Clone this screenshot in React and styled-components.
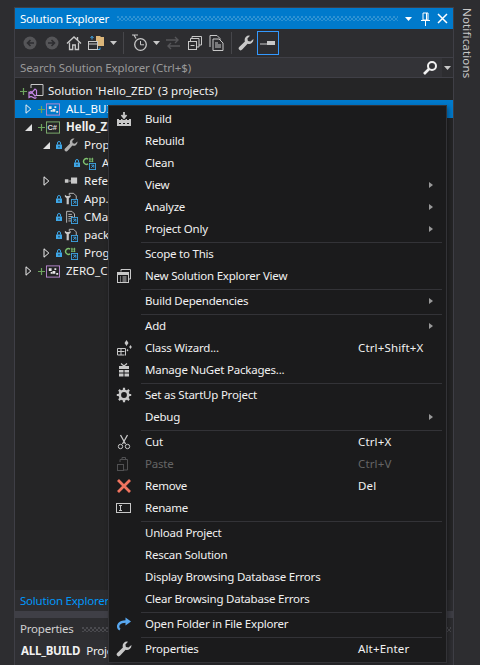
import React from "react";
import styled, { createGlobalStyle } from "styled-components";

const GlobalStyle = createGlobalStyle`
  html, body {
    margin: 0;
    padding: 0;
    background: #2d2d30;
  }
  * { box-sizing: border-box; }
`;

const FONT = `"Noto Sans", "Open Sans", "Liberation Sans", sans-serif`;

const Page = styled.div`
  position: relative;
  width: 480px;
  height: 665px;
  overflow: hidden;
  display: flex;
  padding: 7px 0 0 14px;
  background: #2d2d30;
  color: #f1f1f1;
  font: 11.5px/16px ${FONT};
  letter-spacing: -0.22px;
`;

const Dock = styled.div`
  width: 440px;
  display: flex;
  flex-direction: column;
`;

const ExplorerPane = styled.section`
  height: 604px;
  display: flex;
  flex-direction: column;
  border: 1px solid #3f3f46;
  border-bottom: 0;
`;

const TitleBar = styled.header`
  height: 21px;
  flex: none;
  display: flex;
  align-items: center;
  padding: 0 2px 0 5px;
  background: #007acc;
  color: #fff;
`;

const Grip = styled.div`
  flex: 1;
  height: 5px;
  margin: 0 2px 0 8px;
  background-image:
    radial-gradient(circle at 1px 1px, ${(p) => p.$dot} 0.6px, transparent 1px),
    radial-gradient(circle at 3px 3px, ${(p) => p.$dot} 0.6px, transparent 1px);
  background-size: 4px 4px;
`;

const TitleBtn = styled.span`
  width: 17px;
  height: 16px;
  display: flex;
  align-items: center;
  justify-content: center;
`;

const Toolbar = styled.div`
  height: 28px;
  flex: none;
  display: flex;
  align-items: center;
  padding-left: 4px;
`;

const ToolBtn = styled.span`
  width: ${(p) => p.$w || 22}px;
  height: 24px;
  flex: none;
  display: flex;
  align-items: center;
  justify-content: center;
  border: 1px solid ${(p) => (p.$active ? "#3399ff" : "transparent")};
`;

const ToolSep = styled.span`
  width: 1px;
  height: 22px;
  flex: none;
  margin: 0 ${(p) => p.$r || 5}px 0 ${(p) => p.$l || 4}px;
  background: #46464a;
`;

const SearchBar = styled.div`
  height: 21px;
  flex: none;
  display: flex;
  align-items: center;
  background: #333337;
  border-top: 1px solid #3f3f46;
  border-bottom: 1px solid #3f3f46;
  padding-left: 5px;
  color: #999;
  letter-spacing: -0.1px;
`;

const SearchText = styled.span`
  flex: 1;
`;

const SearchBtn = styled.span`
  width: 24px;
  height: 100%;
  flex: none;
  display: flex;
  align-items: center;
  justify-content: center;
`;

const SearchCaret = styled.span`
  width: 11px;
  height: 100%;
  flex: none;
  display: flex;
  align-items: center;
  justify-content: center;
  background: #2d2d30;
`;

const Tree = styled.div`
  flex: 1;
  padding-top: 4px;
  background: #252526;
  letter-spacing: 0;
`;

const Row = styled.div`
  height: 18px;
  display: flex;
  align-items: center;
  padding-left: ${(p) => (p.$solution ? 2 : p.$depth * 18 + 6)}px;
  background: ${(p) => (p.$selected ? "#007acc" : "transparent")};
  color: ${(p) => (p.$selected ? "#fff" : "#f1f1f1")};
  font-weight: ${(p) => (p.$bold ? 700 : 400)};
  white-space: nowrap;
`;

const Slot = styled.span`
  width: ${(p) => p.$w}px;
  margin-left: ${(p) => p.$ml || 0}px;
  height: 16px;
  flex: none;
  display: flex;
  align-items: center;
  justify-content: center;
`;

const RowLabel = styled.span`
  margin-left: ${(p) => (p.$solution ? 4 : 6)}px;
`;

const BottomTab = styled.div`
  height: 21px;
  flex: none;
  display: flex;
  align-items: center;
  padding-left: 5px;
  background: #2d2d30;
  color: #0097fb;
`;

const PaneGap = styled.div`
  height: 7px;
  flex: none;
  background: #3f3f46;
`;

const PropertiesPane = styled.section`
  flex: 1;
  display: flex;
  flex-direction: column;
  border-left: 1px solid #3f3f46;
  border-right: 1px solid #3f3f46;
`;

const PropsTitle = styled.div`
  height: 22px;
  flex: none;
  display: flex;
  align-items: center;
  padding-left: 5px;
  background: #2d2d30;
  color: #d0d0d0;
`;

const PropsObject = styled.div`
  height: 25px;
  flex: none;
  display: flex;
  align-items: center;
  gap: 6px;
  padding: 0 0 4px 6px;
  background: #2f2f33;
  color: #f1f1f1;
`;

const Strong = styled.b`
  font-weight: 700;
`;

const SideRail = styled.aside`
  width: 26px;
  display: flex;
  justify-content: center;
  padding-top: 1px;
`;

const SideLabel = styled.span`
  writing-mode: vertical-rl;
  color: #c8c8c8;
  line-height: 16px;
  letter-spacing: 0.15px;
`;

const Menu = styled.div`
  position: absolute;
  left: 108px;
  top: 105px;
  width: 339px;
  padding: 3px 2px 1px;
  background: #1b1b1c;
  border: 1px solid #333337;
  box-shadow: 2px 2px 5px rgba(0, 0, 0, 0.35);
`;

const MenuRow = styled.div`
  height: 22px;
  padding-bottom: 2px;
  display: grid;
  grid-template-columns: 34px 1fr 70px 16px;
  align-items: center;
  color: ${(p) => (p.$disabled ? "#656565" : "#f1f1f1")};
  white-space: nowrap;
`;

const MenuIcon = styled.span`
  display: flex;
  align-items: center;
  justify-content: center;
  padding-right: 8px;
`;

const MenuSep = styled.div`
  height: 1px;
  margin: 1px 2px 1px 30px;
  background: #333337;
`;

const Shortcut = styled.span`
  color: ${(p) => (p.$disabled ? "#656565" : "#f1f1f1")};
  letter-spacing: 0.15px;
`;

const SubArrow = styled.span`
  width: 0;
  height: 0;
  justify-self: start;
  margin-left: 1px;
  border-left: 4px solid #999;
  border-top: 3.5px solid transparent;
  border-bottom: 3.5px solid transparent;
`;

const GRAY = "#c8c8c8";
const BLUE = "#3ea6e6";

const Svg = ({ size = 16, children }) => (
  <svg width={size} height={size} viewBox="0 0 16 16" fill="none">{children}</svg>
);

const WRENCH = "M15.4 4.1a4.4 4.4 0 0 1-5.8 4.6L4.2 14.6a2 2 0 0 1-3-2.7l5.7-5.5A4.4 4.4 0 0 1 12 .7L9.4 3.4l.5 2.6 2.6.5z";

const Caret = ({ color = GRAY }) => (
  <svg width="7" height="4" viewBox="0 0 7 4"><path d="M0 0h7L3.5 4z" fill={color} /></svg>
);

const NavCircle = ({ flip }) => (
  <Svg>
    <circle cx="8" cy="8" r="6.5" fill="#555558" />
    <path d={flip ? "M4 8h6M7.5 5l3 3-3 3" : "M12 8H6M8.5 5l-3 3 3 3"} stroke="#2d2d30" strokeWidth="1.6" />
  </Svg>
);

const HomeIcon = () => (
  <Svg>
    <path d="M1 8.5 8 2l7 6.5" stroke={GRAY} strokeWidth="1.4" />
    <path d="M3.5 7.5V14.5h3.2V10h2.6v4.5h3.2V7.5" stroke={GRAY} strokeWidth="1.3" />
    <path d="M11.5 2v3" stroke={GRAY} strokeWidth="1.4" />
  </Svg>
);

const SwitchViewsIcon = () => (
  <svg width="18" height="16" viewBox="0 0 18 16" fill="none">
    <path d="M9 1h4l1 1h3v9H9z" fill="#dcb67a" />
    <rect x="1.5" y="6.5" width="9" height="8" fill="#2d2d30" stroke={GRAY} />
    <path d="M1.5 9h9" stroke={GRAY} />
    <path d="M5 1.5v3M3.5 3 5 1.2 6.5 3" stroke={BLUE} />
    <path d="M13 12.5v2h-2" stroke={BLUE} />
  </svg>
);

const ClockIcon = () => (
  <svg width="18" height="18" viewBox="0 0 18 18" fill="none">
    <path d="M1 1h6M3 1l2 3.5" stroke={GRAY} strokeWidth="1.2" />
    <circle cx="9.5" cy="10.5" r="5.8" stroke={GRAY} strokeWidth="1.3" />
    <path d="M9.5 7v3.8H13" stroke={GRAY} />
  </svg>
);

const SyncIcon = () => (
  <Svg>
    <path d="M1 5h12M10 2l3 3-3 3M15 11H3M6 8l-3 3 3 3" stroke="#555558" strokeWidth="1.4" />
  </Svg>
);

const CollapseIcon = () => (
  <Svg>
    <path d="M5 4V1.5h9.5V10H12" stroke={GRAY} />
    <path d="M3.5 6V3.5H12V12H9" stroke={GRAY} />
    <rect x="1.5" y="6.5" width="8" height="8" stroke={GRAY} />
    <path d="M3.5 10.5h4" stroke={GRAY} />
  </Svg>
);

const ShowAllIcon = () => (
  <svg width="18" height="18" viewBox="0 0 18 18" fill="none">
    <path d="M2 13V1.5h7l3 3V6" stroke={GRAY} />
    <path d="M5 16V5h6l4 4v7.5H5z" stroke={GRAY} />
    <path d="M7 9h3M7 11h6M7 13h6" stroke={GRAY} />
  </svg>
);

const WrenchIcon = ({ color = GRAY }) => (
  <Svg><path d={WRENCH} fill={color} /></Svg>
);

const PreviewIcon = () => (
  <Svg>
    <path d="M0 9h7" stroke={GRAY} />
    <rect x="7" y="6" width="8" height="4" fill={GRAY} />
  </Svg>
);

const MagnifierIcon = () => (
  <Svg>
    <circle cx="10" cy="6" r="4" stroke="#f1f1f1" strokeWidth="2" />
    <path d="M7 9l-5 5" stroke="#f1f1f1" strokeWidth="2.6" />
  </Svg>
);

const PinIcon = () => (
  <svg width="9" height="14" viewBox="0 0 9 14" fill="none">
    <path d="M2 1h5v7H2z" stroke="#fff" />
    <path d="M5.5 1v7" stroke="#fff" />
    <path d="M0 8.5h9M4.5 9v5" stroke="#fff" />
  </svg>
);

const CloseIcon = () => (
  <svg width="11" height="11" viewBox="0 0 11 11"><path d="M1 1l9 9M10 1l-9 9" stroke="#fff" strokeWidth="1.5" /></svg>
);

const ArrowOpen = ({ color = "#f1f1f1" }) => (
  <svg width="7" height="10" viewBox="0 0 7 10" fill="none"><path d="M1 .8 5.800 5 1 9.200z" stroke={color} /></svg>
);

const ArrowDown = () => (
  <svg width="7" height="7" viewBox="0 0 7 7"><path d="M7 0v7H0z" fill="#e0e0e0" /></svg>
);

const Plus = () => (
  <svg width="7" height="7" viewBox="0 0 7 7"><path d="M3.5 0v7M0 3.500h7" stroke="#6da35e" strokeWidth="1.2" /></svg>
);

const Lock = () => (
  <svg width="6" height="8" viewBox="0 0 6 8" fill="none">
    <path d="M1.500 3.500V2a1.500 1.500 0 0 1 3 0v1.500" stroke={BLUE} />
    <path d="M0 3.500h6V8H0zM2.500 5v1.500h1V5z" fill={BLUE} fillRule="evenodd" />
  </svg>
);

const SolutionIcon = () => (
  <svg width="16" height="16" viewBox="0 0 16 16" fill="none">
    <path d="M3 5V1.500h12v11H8" stroke={GRAY} />
    <path d="M1 9.500l2-1 4 4.500 1.500-.8v-5L7 6l-4 4.500-2-1v5l2-1 4 1.800 1.500-.8" stroke="#c586e6" strokeWidth="1.2" />
  </svg>
);

const CmakeTargetIcon = () => (
  <svg width="15" height="13" viewBox="0 0 15 13" fill="none">
    <rect x=".5" y=".5" width="14" height="12" stroke="#b98ad0" />
    <path d="M3 3h3v3H3zM7 6h3v3H7z" fill="#e8e8e8" />
    <path d="M9 3h2v2H9zM5 7h2v2H5zM11 8h2v2h-2z" fill="#e8e8e8" />
  </svg>
);

const CsProjIcon = () => (
  <svg width="15" height="13" viewBox="0 0 15 13" fill="none">
    <rect x=".5" y=".5" width="14" height="12" stroke="#7fb06f" />
    <text x="1.6" y="9.500" fontSize="8" fontFamily="Liberation Sans, sans-serif" fill="#dcdcdc">C#</text>
  </svg>
);

const LinkBadge = () => (
  <>
    <rect x="8.5" y="8.5" width="7" height="7" fill="#252526" stroke={BLUE} />
    <path d="M10.500 10.500h3v3M13.500 10.500l-3 3" stroke={BLUE} />
  </>
);

const CsFileIcon = () => (
  <Svg>
    <path d="M7 3.500A3.300 3.300 0 1 0 7 9" stroke="#7fc16f" strokeWidth="1.6" />
    <path d="M9 2v5M12 2v5M8 3.500h5M8 6h5" stroke="#7fc16f" />
    <LinkBadge />
  </Svg>
);

const ReferencesIcon = () => (
  <Svg>
    <rect x="1" y="6" width="4" height="4" fill="#c8c8c8" />
    <path d="M5 8h3" stroke="#c8c8c8" />
    <rect x="8" y="4" width="7" height="7" fill="#c8c8c8" />
  </Svg>
);

const ConfigIcon = () => (
  <Svg>
    <path d="M6 4V1.500h5l3 3V8" stroke={GRAY} />
    <path d="M1 3v2.500l2 1.500v7h2.500V7l2-1.500V3L6 4.500H3z" fill={GRAY} />
    <LinkBadge />
  </Svg>
);

const TextFileIcon = () => (
  <Svg>
    <path d="M3 14.500V1.500h6l3 3V8" stroke={GRAY} />
    <path d="M5 5h4M5 7.500h5M5 10h3M5 12.500h3" stroke={GRAY} />
    <LinkBadge />
  </Svg>
);

const BuildIcon = () => (
  <Svg>
    <path d="M8 1v5M5.500 4 8 7l2.500-3" stroke={GRAY} strokeWidth="1.8" />
    <path d="M1 8h2v1h2V8h1.500v1h3V8H11v1h2V8h2v7H1z" fill={GRAY} />
    <path d="M3 12h2v1H3zM7 12h2v1H7zM11 12h2v1h-2z" fill="#1b1b1c" />
  </Svg>
);

const NewViewIcon = () => (
  <Svg>
    <path d="M5 3.500V1.500h9.500V11H13" stroke={GRAY} />
    <rect x="1.5" y="4.5" width="11" height="10" stroke={GRAY} />
    <path d="M2 5h10v2H2z" fill={GRAY} />
    <path d="M4 9h1M6.500 9h4M4 11h1M6.500 11h4M4 13h1M6.500 13h4" stroke={GRAY} />
  </Svg>
);

const WizardIcon = () => (
  <Svg>
    <path d="M1.500 8.500h8v7" stroke={GRAY} />
    <path d="M1.500 8.500v6.500h7M1.500 11.500h7M5 9v6" stroke={GRAY} />
    <path d="M10.500 0l2 3-2 3-2-3zM14.500 5l1.300 2-1.300 2-1.300-2zM11.500 9l1 1.200-1 1.200-1-1.200z" fill={GRAY} />
  </Svg>
);

const NugetIcon = () => (
  <Svg>
    <path d="M5 1.500 8 4l3-2.500" stroke={GRAY} strokeWidth="1.2" />
    <path d="M3 4h10v3H3z" fill={GRAY} />
    <path d="M3 8h4.500v6.500H3zM8.500 8H13v6.500H8.500z" fill={GRAY} />
    <path d="M3 11h10" stroke="#1b1b1c" />
  </Svg>
);

const GearIcon = () => (
  <Svg>
    <circle cx="8" cy="8" r="4.2" stroke={GRAY} strokeWidth="2.6" />
    <path d="M8 .8v2.400M8 12.800v2.400M.8 8h2.400M12.800 8h2.400M2.900 2.900l1.700 1.700M11.400 11.400l1.700 1.700M13.100 2.900l-1.700 1.700M4.600 11.400l-1.700 1.700" stroke={GRAY} strokeWidth="2.2" />
  </Svg>
);

const ScissorsIcon = () => (
  <Svg>
    <path d="M4.500 1l5 9M11.500 1l-5 9" stroke={GRAY} strokeWidth="1.3" />
    <circle cx="4.5" cy="12.5" r="2.2" stroke={GRAY} />
    <circle cx="11.5" cy="12.5" r="2.2" stroke={GRAY} />
  </Svg>
);

const PasteIcon = () => (
  <Svg>
    <path d="M4 6V3.500h7.500V14H8" stroke="#505052" />
    <path d="M6 3.500V1.500h3.500v2" stroke="#505052" />
    <rect x="1.5" y="8.5" width="6" height="6" stroke="#505052" />
  </Svg>
);

const RemoveIcon = () => (
  <Svg><path d="M2 2l12 12M14 2 2 14" stroke="#f0745f" strokeWidth="2.8" /></Svg>
);

const RenameIcon = () => (
  <Svg>
    <rect x=".5" y="3.5" width="14" height="9" stroke={GRAY} />
    <path d="M3 5.500h3M3 10.500h3M4.500 5.500v5" stroke={GRAY} />
  </Svg>
);

const OpenFolderIcon = () => (
  <Svg>
    <path d="M4 13.500C2 12.500 1.500 10 3 8c1.500-2 4-2.500 7-2.500" stroke="#59a8f0" strokeWidth="2.4" />
    <path d="M9.500 1.500 15 5.500 9.500 9.500z" fill="#59a8f0" />
  </Svg>
);

const treeRows = [
  { depth: -1, state: "plus", icon: <SolutionIcon />, label: "Solution 'Hello_ZED' (3 projects)", solution: true },
  { depth: 0, arrow: "open", state: "plus", icon: <CmakeTargetIcon />, label: "ALL_BUILD", selected: true },
  { depth: 0, arrow: "down", state: "plus", icon: <CsProjIcon />, label: "Hello_ZED", bold: true },
  { depth: 1, arrow: "down", state: "lock", icon: <WrenchIcon color="#b0b0b0" />, label: "Properties" },
  { depth: 2, state: "lock", icon: <CsFileIcon />, label: "AssemblyInfo.cs" },
  { depth: 1, arrow: "open", icon: <ReferencesIcon />, label: "References" },
  { depth: 1, state: "lock", icon: <ConfigIcon />, label: "App.config" },
  { depth: 1, state: "lock", icon: <TextFileIcon />, label: "CMakeLists.txt" },
  { depth: 1, state: "lock", icon: <ConfigIcon />, label: "packages.config" },
  { depth: 1, arrow: "open", state: "lock", icon: <CsFileIcon />, label: "Program.cs" },
  { depth: 0, arrow: "open", state: "plus", icon: <CmakeTargetIcon />, label: "ZERO_CHECK" },
];

const menuItems = [
  { label: "Build", icon: <BuildIcon /> },
  { label: "Rebuild" },
  { label: "Clean" },
  { label: "View", sub: true },
  { label: "Analyze", sub: true },
  { label: "Project Only", sub: true },
  { sep: true },
  { label: "Scope to This" },
  { label: "New Solution Explorer View", icon: <NewViewIcon /> },
  { sep: true },
  { label: "Build Dependencies", sub: true },
  { sep: true },
  { label: "Add", sub: true },
  { label: "Class Wizard...", icon: <WizardIcon />, keys: "Ctrl+Shift+X" },
  { label: "Manage NuGet Packages...", icon: <NugetIcon /> },
  { sep: true },
  { label: "Set as StartUp Project", icon: <GearIcon /> },
  { label: "Debug", sub: true },
  { sep: true },
  { label: "Cut", icon: <ScissorsIcon />, keys: "Ctrl+X" },
  { label: "Paste", icon: <PasteIcon />, keys: "Ctrl+V", disabled: true },
  { label: "Remove", icon: <RemoveIcon />, keys: "Del" },
  { label: "Rename", icon: <RenameIcon /> },
  { sep: true },
  { label: "Unload Project" },
  { label: "Rescan Solution" },
  { label: "Display Browsing Database Errors" },
  { label: "Clear Browsing Database Errors" },
  { sep: true },
  { label: "Open Folder in File Explorer", icon: <OpenFolderIcon /> },
  { sep: true },
  { label: "Properties", icon: <WrenchIcon />, keys: "Alt+Enter" },
];

const TreeRow = ({ row }) => (
  <Row $depth={row.depth} $solution={row.solution} $selected={row.selected} $bold={row.bold}>
    {!row.solution && (
      <Slot $w={14}>
        {row.arrow === "open" && <ArrowOpen />}
        {row.arrow === "down" && <ArrowDown />}
      </Slot>
    )}
    <Slot $w={12}>
      {row.state === "plus" && <Plus />}
      {row.state === "lock" && <Lock />}
    </Slot>
    <Slot $w={row.solution ? 16 : 14} $ml={-1}>{row.icon}</Slot>
    <RowLabel $solution={row.solution}>{row.label}</RowLabel>
  </Row>
);

const App = () => (
  <Page>
    <GlobalStyle />
    <Dock>
      <ExplorerPane>
        <TitleBar>
          Solution Explorer
          <Grip $dot="#3f9bd8" />
          <TitleBtn><Caret color="#fff" /></TitleBtn>
          <TitleBtn><PinIcon /></TitleBtn>
          <TitleBtn><CloseIcon /></TitleBtn>
        </TitleBar>
        <Toolbar>
          <ToolBtn><NavCircle /></ToolBtn>
          <ToolBtn><NavCircle flip /></ToolBtn>
          <ToolBtn><HomeIcon /></ToolBtn>
          <ToolBtn><SwitchViewsIcon /></ToolBtn>
          <ToolBtn $w={12}><Caret /></ToolBtn>
          <ToolSep />
          <ToolBtn><ClockIcon /></ToolBtn>
          <ToolBtn $w={11}><Caret /></ToolBtn>
          <ToolBtn><SyncIcon /></ToolBtn>
          <ToolBtn><CollapseIcon /></ToolBtn>
          <ToolBtn><ShowAllIcon /></ToolBtn>
          <ToolSep $l={3} $r={3} />
          <ToolBtn><WrenchIcon /></ToolBtn>
          <ToolBtn $active><PreviewIcon /></ToolBtn>
        </Toolbar>
        <SearchBar>
          <SearchText>Search Solution Explorer (Ctrl+$)</SearchText>
          <SearchBtn><MagnifierIcon /></SearchBtn>
          <SearchCaret><Caret /></SearchCaret>
        </SearchBar>
        <Tree>
          {treeRows.map((row) => <TreeRow key={row.label} row={row} />)}
        </Tree>
        <BottomTab>Solution Explorer</BottomTab>
      </ExplorerPane>
      <PaneGap />
      <PropertiesPane>
        <PropsTitle>
          Properties
          <Grip $dot="#55555a" />
        </PropsTitle>
        <PropsObject>
          <Strong>ALL_BUILD</Strong> Project Properties
        </PropsObject>
      </PropertiesPane>
    </Dock>
    <SideRail>
      <SideLabel>Notifications</SideLabel>
    </SideRail>
    <Menu>
      {menuItems.map((item, i) =>
        item.sep ? (
          <MenuSep key={i} />
        ) : (
          <MenuRow key={item.label} $disabled={item.disabled}>
            <MenuIcon>{item.icon}</MenuIcon>
            <span>{item.label}</span>
            <Shortcut $disabled={item.disabled}>{item.keys}</Shortcut>
            {item.sub ? <SubArrow /> : <span />}
          </MenuRow>
        )
      )}
    </Menu>
  </Page>
);

export default App;
